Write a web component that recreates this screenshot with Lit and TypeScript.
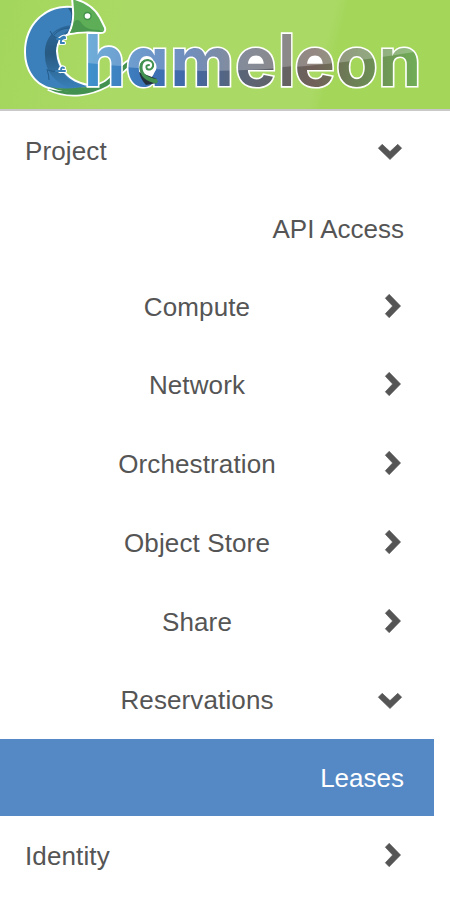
import { LitElement, html, svg, css } from "lit";
import { customElement, property } from "lit/decorators.js";
import { classMap } from "lit/directives/class-map.js";

@customElement("chameleon-logo")
class ChameleonLogo extends LitElement {
  static styles = css`
    :host { display: block; height: 109px; }
    svg { display: block; overflow: hidden; }
    .word { font-family: Inter, "Open Sans", sans-serif; font-weight: 650; font-size: 68.5px; font-feature-settings: "cv11"; }
    .letter { fill: url(#ink); stroke: #fff; stroke-width: 3.2px; paint-order: stroke; stroke-linejoin: miter; }
  `;

  // glyph, left edge, horizontal scale, vertical scale
  private letters: [string, number, number, number][] = [
    ["h", 84, 0.97, 1.035], ["a", 125.8, 1, 1], ["m", 170.3, 1.02, 1], ["e", 235.3, 1, 1],
    ["l", 278.4, 0.88, 1.035], ["e", 294.6, 0.99, 1], ["o", 336, 0.99, 1], ["n", 378.6, 1, 1],
  ];

  render() {
    return html`
      <svg width="450" height="109" viewBox="0 0 450 109" role="img" aria-label="Chameleon">
        <defs>
          <linearGradient id="hue" gradientUnits="userSpaceOnUse" x1="87" y1="0" x2="420" y2="0">
            <stop offset="0" stop-color="#3f92cd" /><stop offset=".18" stop-color="#3c74b8" />
            <stop offset=".3" stop-color="#4068a8" /><stop offset=".42" stop-color="#566580" /><stop offset=".5" stop-color="#5e6472" />
            <stop offset=".6" stop-color="#646262" /><stop offset=".68" stop-color="#716059" />
            <stop offset=".8" stop-color="#6c8055" /><stop offset="1" stop-color="#70af57" />
          </linearGradient>
          <linearGradient id="belly" x1="0" y1="0" x2="0" y2="1">
            <stop offset="0" stop-color="#2d689c" /><stop offset=".45" stop-color="#285a82" /><stop offset="1" stop-color="#387fb8" />
          </linearGradient>
          <pattern id="ink" patternUnits="userSpaceOnUse" x="0" y="0" width="450" height="109">
            <rect width="450" height="109" fill="url(#hue)" />
            <path d="M80 0V63Q150 70 205 71Q310 70 420 51V0Z" fill="#fff" opacity=".25" />
          </pattern>
        </defs>

        <path d="M49 87C70 97 91 92 106 84C117 76 123 65 135 60L148 58" fill="none" stroke="#fff" stroke-width="8" />
        <path d="M49 87C70 97 91 92 106 84C117 76 123 65 135 60L148 58" fill="none" stroke="#439150" stroke-width="4.6" />
        <path d="M73 8C47 5 26 24 26 52C26 70 36 83 49 87C62 90 78 90 88 86C68 82 57 69 56 51C56 41 62 34 72 32Z" fill="#3b80ba" stroke="#fff" stroke-width="4" paint-order="stroke" />
        <path d="M72 25C52 27 44 40 45 56C45 70 54 82 69 88L83 86C65 81 56 67 56 51C56 41 62 34 72 32Z" fill="url(#belly)" />
        <path d="M68 8L74 8V23L70 23Q74 15 68 8Z" fill="#275980" />
        <path d="M50 31Q51 35 58 39L61 36L70 29Q59 28 53 34Z" fill="#3878ad" />
        <path d="M50 31Q51 35 58 39M54 35Q60 28 70 28" fill="none" stroke="#245b89" stroke-width="1" />
        <path d="M47 69Q49 76 49 80M48 70Q53 73 59 70" fill="none" stroke="#245b89" stroke-width="1" />
        <path d="M60 39Q65 35 65 38Q60 39 61 43L64 43M60 71Q61 66 64 68M61 71L65 71" fill="none" stroke="#fff" stroke-width="4.2" stroke-linecap="round" />
        <path d="M57 39L60 39Q65 35 65 38Q60 39 61 43L64 43M56 71L61 71Q61 66 64 68M61 71L65 71" fill="none" stroke="#387fb8" stroke-width="2" stroke-linecap="round" />
        <path d="M49 86C62 91 78 87 98 86Q84 93 70 92Q57 91 49 86Z" fill="#439150" />
        <path d="M73 -3L75 0Q92 5 99 18L104 28Q105 32 101 32Q83 30 70 33Q75 23 74 10Z" fill="#5ead57" stroke="#fff" stroke-width="4" paint-order="stroke" />
        <path d="M74 22C78 17 81 22 83 25Q87 30 99 30L103 32Q84 30 70 33Q73 28 74 22Z" fill="#4a984e" />
        <circle cx="87.5" cy="16" r="4.2" fill="#429348" /><circle cx="87.5" cy="16" r="2.8" fill="#fff" />
        <circle cx="148" cy="67" r="13" fill="#fff" />
        <ellipse cx="256.5" cy="60" rx="9" ry="5" fill="#fff" />
        <ellipse cx="315" cy="60" rx="9" ry="5" fill="#fff" />

        <g class="word">
          ${this.letters.map(([ch, x, kx, ky]) => svg`<text class="letter" transform="translate(${x} 85.7) scale(${kx} ${ky}) translate(${-x} -85.7)" x="${x}" y="85.7">${ch}</text>`)}
        </g>
        <circle cx="148.5" cy="67" r="8" fill="#fff" />
        <path d="M139 72Q141 80 146 85L157 83V79Z" fill="#23313e" />
        <path d="M157 81.5Q141 78 140.5 68Q141 60 148 60Q154 61 153 66.5Q151 71 147 69Q145 65 149 65" fill="none" stroke="#439150" stroke-width="2" stroke-linecap="round" />
        <path d="M157 83.5Q140 81 139.5 67Q139.5 60 148 59.5Q142 62 142.5 68Q143 77 157 79Z" fill="#439150" />
      </svg>
    `;
  }
}

type Kind = "group" | "panel" | "leaf";

@customElement("nav-row")
class NavRow extends LitElement {
  @property() label = "";
  @property() kind: Kind = "panel";
  @property({ type: Boolean }) open = false;
  @property({ type: Boolean }) active = false;

  static styles = css`
    :host { display: block; height: 78px; }
    :host([tall]) { height: 79px; }
    :host([active]) { height: 77px; }
    .row { display: flex; align-items: center; box-sizing: border-box; width: 434px; height: 100%; padding: 0 30px 0 25px; color: #555; }
    .label { flex: 1; white-space: nowrap; letter-spacing: .12px; }
    .panel .label { text-align: center; padding-right: 9px; }
    .leaf .label { text-align: right; letter-spacing: 0; }
    .active { background: #5589c5; color: #fff; }
    .icon { display: flex; justify-content: center; align-items: center; width: 24px; height: 24px; margin-right: 2px; }
    .icon svg { display: block; overflow: visible; fill: #555; stroke: #555; stroke-width: .6px; stroke-linejoin: round; }
    .icon.open { margin-top: 2px; }
    .icon.closed { justify-content: flex-end; margin-right: 3px; margin-bottom: 2px; width: 23px; }
  `;

  render() {
    return html`
      <div class=${classMap({ row: true, [this.kind]: true, active: this.active })}>
        <span class="label">${this.label}</span>
        ${this.kind === "leaf" ? null : html`
          <span class=${classMap({ icon: true, open: this.open, closed: !this.open })}>
            ${this.open
              ? html`<svg width="24" height="16" viewBox="0 0 24 16"><path d="M.3 4.2L4.2 .3L12 7.6L19.8 .3L23.7 4.2L12 15.6Z" /></svg>`
              : html`<svg width="16" height="24" viewBox="0 0 16 24"><path d="M.3 4.2L4.2 .3L15.6 12L4.2 23.7L.3 19.8L7.6 12Z" /></svg>`}
          </span>`}
      </div>
    `;
  }
}

@customElement("app-root")
class AppRoot extends LitElement {
  static styles = css`
    :host { display: block; width: 450px; height: 912px; overflow: hidden; background: #fff; font: 26px/30px "Liberation Sans", Arial, sans-serif; }
    .header { height: 109px; border-bottom: 2px solid #c9c9c9; background: linear-gradient(105deg, #a3d65c 0%, #abd965 28%, #abd966 70%, #a4d65a 73%, #a4d65a 100%); }
    .menu { display: flex; flex-direction: column; padding-top: 1px; }
  `;

  render() {
    return html`
      <div class="header"><chameleon-logo></chameleon-logo></div>
      <nav class="menu">
        <nav-row label="Project" kind="group" open></nav-row>
        <nav-row label="API Access" kind="leaf"></nav-row>
        <nav-row label="Compute"></nav-row>
        <nav-row label="Network"></nav-row>
        <nav-row label="Orchestration" tall></nav-row>
        <nav-row label="Object Store" tall></nav-row>
        <nav-row label="Share" tall></nav-row>
        <nav-row label="Reservations" open></nav-row>
        <nav-row label="Leases" kind="leaf" active></nav-row>
        <nav-row label="Identity" kind="group" tall></nav-row>
      </nav>
    `;
  }
}
